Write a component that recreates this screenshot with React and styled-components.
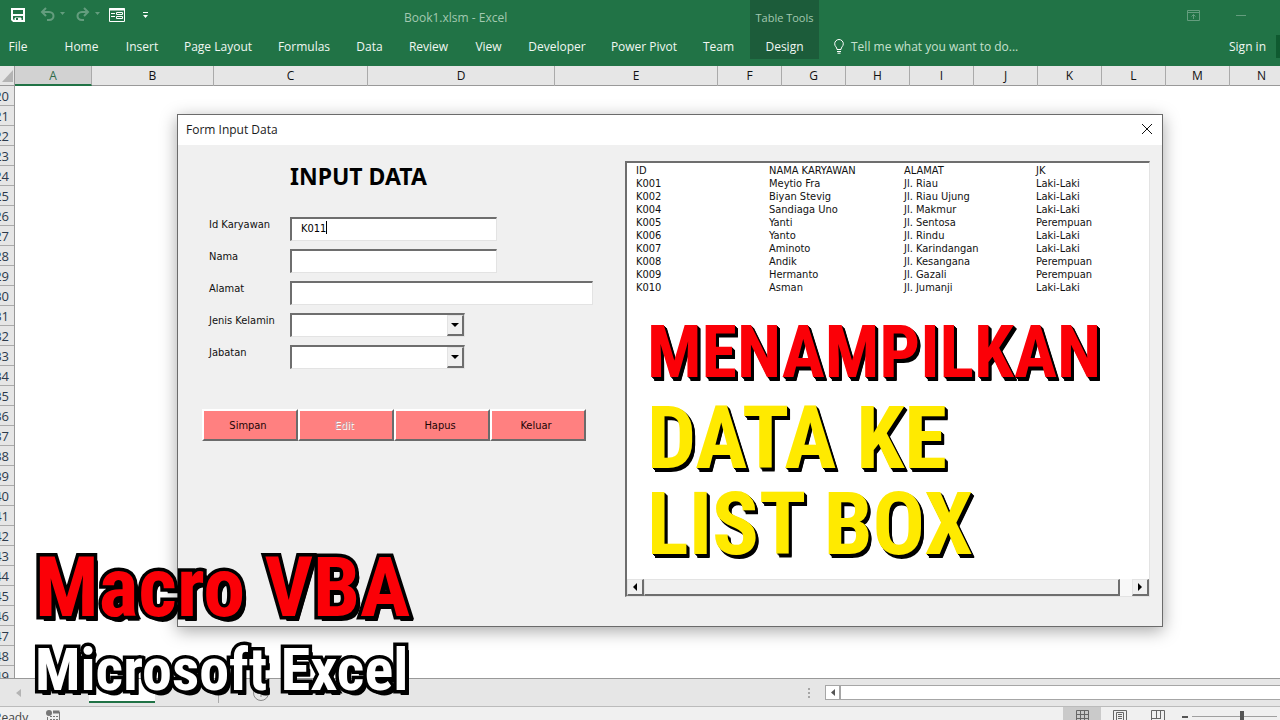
import styled, { createGlobalStyle, css } from "styled-components";

const tabs = [
  { name: "File", width: 50 },
  { name: "Home", width: 63 },
  { name: "Insert", width: 58 },
  { name: "Page Layout", width: 94 },
  { name: "Formulas", width: 78 },
  { name: "Data", width: 53 },
  { name: "Review", width: 65 },
  { name: "View", width: 55 },
  { name: "Developer", width: 82 },
  { name: "Power Pivot", width: 92 },
  { name: "Team", width: 57 },
];

const columns = [
  { name: "A", width: 77, active: true },
  { name: "B", width: 122 },
  { name: "C", width: 154 },
  { name: "D", width: 187 },
  { name: "E", width: 163 },
  ..."FGHIJKLMN".split("").map((name) => ({ name, width: 64 })),
];

const rowNumbers = Array.from({ length: 30 }, (_, i) => i + 20);

const employees = [
  ["K001", "Meytio Fra", "Jl. Riau", "Laki-Laki"],
  ["K002", "Biyan Stevig", "Jl. Riau Ujung", "Laki-Laki"],
  ["K004", "Sandiaga Uno", "Jl. Makmur", "Laki-Laki"],
  ["K005", "Yanti", "Jl. Sentosa", "Perempuan"],
  ["K006", "Yanto", "Jl. Rindu", "Laki-Laki"],
  ["K007", "Aminoto", "Jl. Karindangan", "Laki-Laki"],
  ["K008", "Andik", "Jl. Kesangana", "Perempuan"],
  ["K009", "Hermanto", "Jl. Gazali", "Perempuan"],
  ["K010", "Asman", "Jl. Jumanji", "Laki-Laki"],
];

const Ribbon = () => (
  <RibbonBar>
    <RibbonLeft>
      <TitleRow>
        <QuickAccess>
          <ToolButton aria-label="Save" $width={30}>
            <svg width="16" height="16" viewBox="0 0 16 16" fill="none" stroke="#fff" strokeWidth="2">
              <path d="M2 2h12v12H3.500L2 12.500z" />
              <path d="M2 8h12" />
              <path d="M5 14v-3h6v3" strokeWidth="1" fill="#fff" />
              <path d="M6 11h2v2H6z" fill="#217346" stroke="none" />
            </svg>
          </ToolButton>
          <ToolButton aria-label="Undo" $faded $width={35}>
            <svg width="25" height="16" viewBox="0 0 25 16" fill="none" stroke="#fff" strokeWidth="2">
              <path d="M6 1L2 5l4 4M2 5h7c6 0 6 8 0 8H7" />
              <path d="M20 5h5l-2.500 3z" fill="#fff" stroke="none" />
            </svg>
          </ToolButton>
          <ToolButton aria-label="Redo" $faded $width={34}>
            <svg width="25" height="16" viewBox="0 0 25 16" fill="none" stroke="#fff" strokeWidth="2">
              <path d="M9 1l4 4-4 4M13 5H7c-6 0-6 8 0 8h2" />
              <path d="M20 5h5l-2.500 3z" fill="#fff" stroke="none" />
            </svg>
          </ToolButton>
          <ToolButton aria-label="Form" $width={34}>
            <svg width="16" height="14" viewBox="0 0 16 14" fill="none" stroke="#fff">
              <path d="M.5.5h15v13H.5z" />
              <path d="M0 1.500h16" strokeWidth="2" />
              <path d="M2 5.500h4M2 8.500h4M7.500 4.500h6v2h-6zM7.500 8.500h6v2h-6z" />
            </svg>
          </ToolButton>
          <ToolButton aria-label="Customize quick access toolbar">
            <svg width="5" height="7" viewBox="0 0 5 7" fill="#fff">
              <path d="M0 0h5v1H0zM0 3h5L2.500 6z" />
            </svg>
          </ToolButton>
        </QuickAccess>
        <BookTitle>Book1.xlsm - Excel</BookTitle>
      </TitleRow>
      <TabRow>
        {tabs.map((tab) => (
          <Tab key={tab.name} $width={tab.width}>
            {tab.name}
          </Tab>
        ))}
      </TabRow>
    </RibbonLeft>
    <ContextTab>
      <ContextLabel>Table Tools</ContextLabel>
      <Tab>Design</Tab>
    </ContextTab>
    <RibbonRight>
      <WindowControls>
        <ToolButton aria-label="Ribbon display options" $faded>
          <svg width="13" height="11" viewBox="0 0 13 11" fill="none" stroke="#fff">
            <path d="M.5.500h12v10H.5zM.5 2.500h12M6.500 9V4.500M4.500 6.500l2-2 2 2" />
          </svg>
        </ToolButton>
        <ToolButton aria-label="Minimize" $faded>
          <svg width="10" height="10" viewBox="0 0 10 10" stroke="#fff">
            <path d="M0 5.500h10" />
          </svg>
        </ToolButton>
      </WindowControls>
      <SearchRow>
        <TellMe>
          <svg width="10" height="15" viewBox="0 0 10 15" fill="none" stroke="#fff">
            <path d="M3 10.500C3 8 .7 7.500.7 4.800a4.300 4.300 0 0 1 8.600 0C9.300 7.500 7 8 7 10.500zM3 12.500h4M3.500 14.200h3" />
          </svg>
          Tell me what you want to do...
        </TellMe>
        <Tab>Sign in</Tab>
        <ShareEdge />
      </SearchRow>
    </RibbonRight>
  </RibbonBar>
);

const Field = ({ id, label, children }) => (
  <FieldRow>
    <FieldLabel htmlFor={id}>{label}</FieldLabel>
    {children}
  </FieldRow>
);

const Combo = ({ id }) => (
  <ComboBox>
    <ComboSelect id={id} defaultValue="">
      <option value=""></option>
    </ComboSelect>
    <ComboArrow>
      <svg width="8" height="4" viewBox="0 0 8 4">
        <path d="M0 0h8L4 4z" />
      </svg>
    </ComboArrow>
  </ComboBox>
);

const FormDialog = () => (
  <Dialog role="dialog" aria-label="Form Input Data">
    <DialogTitle>
      <span>Form Input Data</span>
      <CloseButton aria-label="Close">
        <svg width="10" height="10" viewBox="0 0 10 10" stroke="#111">
          <path d="M0 0l10 10M10 0L0 10" />
        </svg>
      </CloseButton>
    </DialogTitle>
    <DialogBody>
      <FormPane>
        <FormHeading>INPUT DATA</FormHeading>
        <Fields>
          <Field id="idk" label="Id Karyawan">
            <CaretHolder>
              <TextBox id="idk" defaultValue="K011" $width={207} />
              <Caret />
            </CaretHolder>
          </Field>
          <Field id="nama" label="Nama">
            <TextBox id="nama" $width={207} />
          </Field>
          <Field id="alamat" label="Alamat">
            <TextBox id="alamat" $width={303} />
          </Field>
          <Field id="jk" label="Jenis Kelamin">
            <Combo id="jk" />
          </Field>
          <Field id="jabatan" label="Jabatan">
            <Combo id="jabatan" />
          </Field>
        </Fields>
        <Actions>
          <ActionButton>Simpan</ActionButton>
          <ActionButton disabled>Edit</ActionButton>
          <ActionButton>Hapus</ActionButton>
          <ActionButton>Keluar</ActionButton>
        </Actions>
      </FormPane>
      <ListBox>
        <ListTable>
          <thead>
            <tr>
              <th>ID</th>
              <th>NAMA KARYAWAN</th>
              <th>ALAMAT</th>
              <th>JK</th>
            </tr>
          </thead>
          <tbody>
            {employees.map((row) => (
              <tr key={row[0]}>
                {row.map((cell, i) => (
                  <td key={i}>{cell}</td>
                ))}
              </tr>
            ))}
          </tbody>
        </ListTable>
        <ListScroll>
          <ScrollButton aria-label="Scroll left">
            <svg width="4" height="8" viewBox="0 0 4 8">
              <path d="M4 0v8L0 4z" />
            </svg>
          </ScrollButton>
          <ScrollThumb />
          <ScrollButton aria-label="Scroll right">
            <svg width="4" height="8" viewBox="0 0 4 8">
              <path d="M0 0v8l4-4z" />
            </svg>
          </ScrollButton>
        </ListScroll>
      </ListBox>
    </DialogBody>
  </Dialog>
);

const App = () => {
  return (
    <>
      <GlobalStyle />
      <Page>
        <Ribbon />
        <ColumnHeads>
          <Corner>
            <svg width="11" height="12" viewBox="0 0 11 12" fill="#b4b4b4">
              <path d="M11 0v12H0z" />
            </svg>
          </Corner>
          {columns.map((col) => (
            <ColumnHead key={col.name} $width={col.width} $active={col.active}>
              {col.name}
            </ColumnHead>
          ))}
        </ColumnHeads>
        <Sheet>
          <RowHeads>
            {rowNumbers.map((n) => (
              <RowHead key={n}>{n}</RowHead>
            ))}
          </RowHeads>
        </Sheet>
        <SheetBar>
          <SheetNav>
            <svg width="5" height="8" viewBox="0 0 5 8" fill="#b4b4b4">
              <path d="M5 0v8L0 4z" />
            </svg>
          </SheetNav>
          <SheetTab $active />
          <SheetTab />
          <NewSheet aria-label="New sheet">
            <svg width="16" height="16" viewBox="0 0 16 16" fill="none" stroke="#888">
              <circle cx="8" cy="8" r="7.500" />
              <path d="M8 4v8M4 8h8" />
            </svg>
          </NewSheet>
          <Grip>
            <svg width="2" height="10" viewBox="0 0 2 10" fill="#a6a6a6">
              <path d="M0 0h2v2H0zM0 4h2v2H0zM0 8h2v2H0z" />
            </svg>
          </Grip>
          <SheetScroll>
            <SheetScrollButton aria-label="Scroll sheet left">
              <svg width="4" height="7" viewBox="0 0 4 7" fill="#555">
                <path d="M4 0v7L0 3.500z" />
              </svg>
            </SheetScrollButton>
          </SheetScroll>
        </SheetBar>
        <StatusBar>
          <StatusLeft>
            Ready
            <svg width="14" height="13" viewBox="0 0 14 13" fill="none" stroke="#777">
              <circle cx="3" cy="3" r="3" fill="#777" stroke="none" />
              <path d="M7 2h6.500" strokeWidth="3" />
              <path d="M1.500 7v5.500h12V2M4 6.500h2m1 0h2m1 0h2M4 9.500h2m1 0h2m1 0h2" />
            </svg>
          </StatusLeft>
          <ViewButton $active aria-label="Normal view">
            <svg width="13" height="12" viewBox="0 0 13 12" fill="none" stroke="#666">
              <path d="M.5.500h12v11H.5zM4.500 0v12M8.500 0v12M0 4.500h13M0 8.500h13" />
            </svg>
          </ViewButton>
          <ViewButton aria-label="Page layout view">
            <svg width="14" height="12" viewBox="0 0 14 12" fill="none" stroke="#666">
              <path d="M.5.500h13v13H.5zM3.500 2.500h7V13h-7zM5 4.500h4M5 6.500h4M5 8.500h4" />
            </svg>
          </ViewButton>
          <ViewButton aria-label="Page break preview">
            <svg width="14" height="12" viewBox="0 0 14 12" fill="none" stroke="#666">
              <path d="M.5 12V.500h13V12M5.500 0v8M9.500 0v8M0 8.500h10" />
            </svg>
          </ViewButton>
          <Zoom>
            <svg width="95" height="12" viewBox="0 0 95 12">
              <path d="M0 6h6v2H0z" fill="#555" />
              <path d="M10 6h85v1H10z" fill="#a0a0a0" />
              <path d="M58 1h4v11h-4z" fill="#555" />
            </svg>
          </Zoom>
        </StatusBar>
        <FormDialog />
        <Headline>
          <HeadlineText $size={72} $line={84} $color="#fb0007">MENAMPILKAN</HeadlineText>
          <HeadlineText $size={87} $line={86} $color="#ffea00">DATA KE</HeadlineText>
          <HeadlineText $size={87} $line={86} $color="#ffea00">LIST BOX</HeadlineText>
        </Headline>
        <Caption>
          <CaptionText $size={84} $line={90} $color="#fb0007">Macro VBA</CaptionText>
          <CaptionText $size={60} $line={74} $color="#fff">Microsoft Excel</CaptionText>
        </Caption>
      </Page>
    </>
  );
};

const GlobalStyle = createGlobalStyle`
  * {
    box-sizing: border-box;
  }

  body {
    margin: 0;
    overflow: hidden;
    font-family: "Open Sans", "Noto Sans", sans-serif;
    font-size: 12px;
    color: #1a1a1a;
  }

  button {
    border: 0;
    padding: 0;
    background: none;
    font: inherit;
    color: inherit;
  }

  svg {
    display: block;
    flex: none;
  }
`;

const formFont = css`
  font-family: "DejaVu Sans Condensed", "DejaVu Sans", sans-serif;
  font-size: 11px;
  line-height: 13px;
`;

const Page = styled.div`
  position: relative;
  display: flex;
  flex-direction: column;
  height: 100vh;
  overflow: hidden;
  background: #fff;
`;

const RibbonBar = styled.header`
  display: flex;
  align-items: flex-start;
  height: 66px;
  background: #217346;
  color: #f0f7f2;
`;

const RibbonLeft = styled.div`
  width: 750px;
`;

const TitleRow = styled.div`
  display: flex;
  align-items: center;
  height: 34px;
`;

const QuickAccess = styled.div`
  display: flex;
  align-items: center;
  width: 404px;
  padding-left: 10px;
  padding-bottom: 4px;
`;

const ToolButton = styled.button`
  width: ${(props) => (props.$width ? `${props.$width}px` : "auto")};
  opacity: ${(props) => (props.$faded ? 0.3 : 1)};
`;

const BookTitle = styled.span`
  color: #a3c9b1;
`;

const TabRow = styled.nav`
  display: flex;
`;

const Tab = styled.button`
  width: ${(props) => (props.$width ? `${props.$width}px` : "auto")};
  height: 25px;
  white-space: nowrap;

  &:first-child {
    padding-right: 14px;
  }
`;

const ContextTab = styled.div`
  display: flex;
  flex-direction: column;
  align-items: center;
  width: 69px;
  background: #1c5c3a;
`;

const ContextLabel = styled.span`
  height: 34px;
  line-height: 36px;
  font-size: 11px;
  color: #a3c9b1;
`;

const RibbonRight = styled.div`
  flex: 1;
`;

const WindowControls = styled.div`
  display: flex;
  align-items: center;
  justify-content: flex-end;
  gap: 36px;
  height: 34px;
  padding: 0 34px 4px 0;
`;

const SearchRow = styled.div`
  display: flex;
  align-items: center;
`;

const TellMe = styled.label`
  display: flex;
  align-items: center;
  gap: 7px;
  flex: 1;
  padding-left: 15px;
  color: #c5e0ce;
`;

const ShareEdge = styled.span`
  width: 4px;
  height: 23px;
  margin-left: 10px;
  background: #0f5a30;
`;

const ColumnHeads = styled.div`
  display: flex;
  height: 20px;
  background: #e6e6e6;
  border-bottom: 1px solid #999;
`;

const Corner = styled.div`
  display: flex;
  align-items: center;
  justify-content: center;
  flex: none;
  width: 15px;
  border-right: 1px solid #999;
`;

const ColumnHead = styled.div`
  flex: none;
  width: ${(props) => props.$width}px;
  height: 20px;
  line-height: 20px;
  font-size: 12px;
  text-align: center;
  color: #111;
  border-right: 1px solid #aaa;

  ${(props) =>
    props.$active &&
    css`
      color: #2f6b4a;
      background: #d2d2d2;
      border-bottom: 2px solid #217346;
    `}
`;

const Sheet = styled.main`
  flex: 1;
  min-height: 0;
  overflow: hidden;
`;

const RowHeads = styled.div`
  width: 15px;
  background: #e6e6e6;
  border-right: 1px solid #999;
  overflow: hidden;
`;

const RowHead = styled.div`
  display: flex;
  justify-content: flex-end;
  height: 20px;
  padding-right: 5px;
  line-height: 20px;
  font-size: 13px;
  color: #2c3a4c;
  border-bottom: 1px solid #aaa;
`;

const SheetBar = styled.footer`
  display: flex;
  height: 28px;
  background: #e6e6e6;
  border-top: 1px solid #999;
`;

const SheetNav = styled.div`
  display: flex;
  align-items: center;
  width: 89px;
  padding-left: 16px;
`;

const SheetTab = styled.div`
  width: 64px;
  height: 24px;
  border-right: 1px solid #aaa;

  ${(props) =>
    props.$active &&
    css`
      width: 66px;
      background: #fff;
      border-right: 0;
      border-bottom: 2px solid #217346;
    `}
`;

const NewSheet = styled.button`
  width: 84px;
  padding-left: 34px;
`;

const Grip = styled.div`
  display: flex;
  align-items: center;
  justify-content: flex-end;
  width: 507px;
`;

const SheetScroll = styled.div`
  flex: 1;
  height: 15px;
  margin: 6px 0 0 15px;
  background: #fff;
  border: 1px solid #a6a6a6;
  border-right: 0;
`;

const SheetScrollButton = styled.button`
  display: flex;
  align-items: center;
  justify-content: center;
  width: 15px;
  height: 13px;
  border-right: 2px solid #a6a6a6;
`;

const StatusBar = styled.div`
  display: flex;
  align-items: flex-start;
  height: 14px;
  overflow: hidden;
  background: #f0f0f0;
  border-top: 1px solid #bbb;
  color: #444;
`;

const StatusLeft = styled.div`
  display: flex;
  align-items: flex-start;
  gap: 18px;
  flex: 1;
  margin-left: -6px;
  padding-top: 3px;
  line-height: 16px;
`;

const ViewButton = styled.button`
  display: flex;
  justify-content: center;
  width: 38px;
  height: 16px;
  padding-top: 3px;
  background: ${(props) => (props.$active ? "#cacaca" : "transparent")};
`;

const Zoom = styled.div`
  width: 103px;
  padding: 3px 0 0 5px;
`;

/* the user form floats over the sheet */
const Dialog = styled.section`
  position: absolute;
  top: 114px;
  left: 177px;
  right: 117px;
  background: #f0f0f0;
  border: 1px solid #6b6b6b;
  box-shadow: 0 4px 16px rgba(0, 0, 0, 0.35);
`;

const DialogTitle = styled.div`
  display: flex;
  align-items: center;
  justify-content: space-between;
  height: 30px;
  padding: 0 10px 2px 8px;
  background: #fff;
`;

const CloseButton = styled.button`
  padding: 0;
`;

const DialogBody = styled.div`
  display: flex;
  height: 481px;
  padding: 16px 12px 29px 24px;
`;

const FormPane = styled.div`
  width: 426px;
`;

const FormHeading = styled.h1`
  margin: 0 0 0 88px;
  font-family: "Comic Sans MS", "Noto Sans", sans-serif;
  font-size: 23px;
  line-height: 30px;
  font-weight: 700;
  color: #000;
`;

const Fields = styled.div`
  display: flex;
  flex-direction: column;
  gap: 8px;
  margin-top: 26px;
  padding-left: 7px;
`;

const FieldRow = styled.div`
  display: flex;
  align-items: flex-start;
  height: 24px;
`;

const FieldLabel = styled.label`
  ${formFont}
  width: 81px;
  padding-top: 1px;
  color: #111;
`;

const sunken = css`
  height: 24px;
  background: #fff;
  border: 2px solid;
  border-color: #6e6e6e #e3e3e3 #e3e3e3 #6e6e6e;
  border-width: 2px 1px 1px 2px;
  border-radius: 0;
  outline: none;
`;

const TextBox = styled.input`
  ${formFont}
  ${sunken}
  width: ${(props) => props.$width}px;
  padding: 0 9px 2px;
`;

const CaretHolder = styled.div`
  position: relative;
`;

const Caret = styled.span`
  position: absolute;
  top: 4px;
  left: 36px;
  width: 1px;
  height: 13px;
  background: #000;
`;

const ComboBox = styled.div`
  ${sunken}
  display: flex;
  width: 175px;
`;

const ComboSelect = styled.select`
  ${formFont}
  flex: 1;
  appearance: none;
  border: 0;
  background: transparent;
  outline: none;
`;

const raised = css`
  display: flex;
  align-items: center;
  justify-content: center;
  background: #f0f0f0;
  border: 1px solid;
  border-color: #e3e3e3 #6e6e6e #6e6e6e #e3e3e3;
  border-width: 1px 2px 2px 1px;
`;

const ComboArrow = styled.span`
  ${raised}
  width: 17px;
`;

const Actions = styled.div`
  display: flex;
  margin-top: 40px;
`;

const ActionButton = styled.button`
  ${formFont}
  width: 96px;
  height: 32px;
  padding-right: 4px;
  color: #1c0505;
  background: #ff8080;
  border: 2px solid;
  border-color: #fff #6b6b6b #6b6b6b #fff;

  &:disabled {
    color: #c99;
    text-shadow: 1px 1px 0 #fff;
  }
`;

const ListBox = styled.div`
  ${sunken}
  display: flex;
  flex-direction: column;
  justify-content: space-between;
  flex: 1;
  height: 436px;
`;

const ListTable = styled.table`
  ${formFont}
  width: 513px;
  margin: 1px 0 0 9px;
  table-layout: fixed;
  border-collapse: collapse;
  color: #111;

  th,
  td {
    height: 13px;
    padding: 0;
    font-weight: 400;
    text-align: left;
    white-space: nowrap;
  }

  th:nth-child(1) {
    width: 133px;
  }

  th:nth-child(2) {
    width: 135px;
  }

  th:nth-child(3) {
    width: 132px;
  }
`;

const ListScroll = styled.div`
  display: flex;
  height: 17px;
  background: #f8f8f8;
`;

const ScrollButton = styled.button`
  ${raised}
  width: 17px;
`;

const ScrollThumb = styled.div`
  ${raised}
  flex: 1;
  margin-right: 12px;
`;

/* poster lettering laid over the window */
const Headline = styled.div`
  position: absolute;
  top: 311px;
  left: 647px;
`;

const HeadlineText = styled.p`
  margin: 0;
  font-family: "Roboto Condensed", "Liberation Sans Narrow", sans-serif;
  font-size: ${(props) => props.$size}px;
  line-height: ${(props) => props.$line}px;
  font-weight: 700;
  white-space: nowrap;
  color: ${(props) => props.$color};
  text-shadow: 1px 1px 0 #000, 2px 2px 0 #000, 3px 3px 0 #000, 3px 4px 0 #000;
`;

const Caption = styled.div`
  position: absolute;
  top: 543px;
  left: 35px;
`;

const CaptionText = styled(HeadlineText)`
  -webkit-text-stroke: 7px #000;
  paint-order: stroke fill;
  stroke-linejoin: round;
  text-shadow: 1px 1px 0 #000, 2px 2px 0 #000, 3px 3px 0 #000, 4px 4px 0 #000,
    4px 5px 0 #000;
`;

export default App;
